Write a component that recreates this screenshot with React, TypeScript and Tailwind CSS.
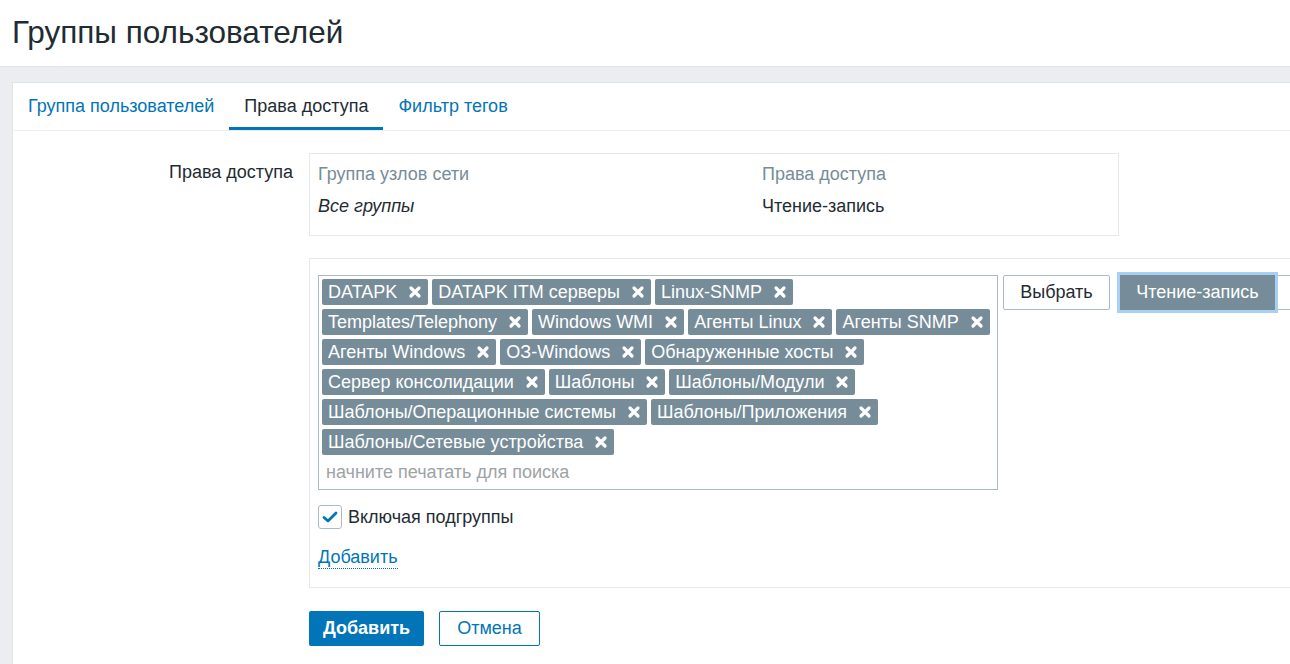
import React from 'react';

const rows: string[][] = [
  ['DATAPK', 'DATAPK ITM серверы', 'Linux-SNMP'],
  ['Templates/Telephony', 'Windows WMI', 'Агенты Linux', 'Агенты SNMP'],
  ['Агенты Windows', 'ОЗ-Windows', 'Обнаруженные хосты'],
  ['Сервер консолидации', 'Шаблоны', 'Шаблоны/Модули'],
  ['Шаблоны/Операционные системы', 'Шаблоны/Приложения'],
  ['Шаблоны/Сетевые устройства'],
];

function CloseIcon() {
  return (
    <svg width="14" height="14" viewBox="0 0 14 14" className="ml-[11px] shrink-0">
      <path d="M3 3 L11 11 M11 3 L3 11" stroke="#fff" strokeWidth="3.2" strokeLinecap="round" />
    </svg>
  );
}

function Tag({ label }: { label: string }) {
  return (
    <span className="flex h-[26px] items-center rounded-[2px] bg-[#768d99] pl-[6px] pr-[6px] text-white mr-[4px] mb-[4px] whitespace-nowrap">
      {label}
      <CloseIcon />
    </span>
  );
}

export default function App() {
  return (
    <div className="w-[1290px] h-[664px] overflow-hidden bg-[#ebeef0] font-['Liberation_Sans',Arial,sans-serif] text-[18px] text-[#1f2c33]">
      <header className="h-[67px] bg-white border-b border-[#dfe4e7] flex items-center px-[12px]">
        <h1 className="text-[31.5px] leading-none text-[#1f2c33] -mt-[1px]">Группы пользователей</h1>
      </header>

      <div className="pt-[15px] pl-[12px]">
        <div className="w-[1400px] h-[600px] bg-white border border-[#dfe4e7]">
          <nav className="flex h-[48px] border-b border-[#ebeef0]">
            <a className="flex items-center px-[15px] text-[#0275b8]">Группа пользователей</a>
            <a className="flex items-center px-[15px] border-b-[3px] border-[#0275b8] pt-[3px]">Права доступа</a>
            <a className="flex items-center px-[15px] text-[#0275b8]">Фильтр тегов</a>
          </nav>

          <div className="flex pt-[22px]">
            <div className="w-[280px] text-right pt-[7px] leading-6 shrink-0">Права доступа</div>
            <div className="ml-[16px] flex flex-col">
              <div className="w-[810px] border border-[#e6e9eb] pt-[7px] pb-[16px] px-[8px]">
                <div className="flex h-[26px] items-center text-[#768d99]">
                  <span className="w-[444px]">Группа узлов сети</span>
                  <span>Права доступа</span>
                </div>
                <div className="flex h-[26px] items-center mt-[6px]">
                  <span className="w-[444px] italic">Все группы</span>
                  <span>Чтение-запись</span>
                </div>
              </div>

              <div className="mt-[22px] w-[1200px] border-t border-l border-b border-[#e6e9eb] pl-[8px] pt-[16px] pb-[18px]">
                <div className="flex items-start">
                  <div className="w-[680px] border border-[#acbbc2] pt-[3px] pl-[3px] pb-[3px] shrink-0">
                    {rows.map((row, i) => (
                      <div key={i} className="flex">
                        {row.map((t) => (
                          <Tag key={t} label={t} />
                        ))}
                      </div>
                    ))}
                    <div className="h-[27px] flex items-center pl-[4px] text-[#9ea3a6]">
                      начните печатать для поиска
                    </div>
                  </div>

                  <button className="ml-[5px] h-[35px] w-[107px] shrink-0 rounded-[2px] border border-[#acbbc2] bg-white text-[#1f2c33]">
                    Выбрать
                  </button>
                  <div className="ml-[10px] flex shrink-0">
                    <button className="relative z-10 h-[35px] w-[155px] bg-[#768d99] text-white shadow-[0_0_0_3px_#a8d0f2]">
                      Чтение-запись
                    </button>
                    <button
                      aria-label="Только чтение"
                      className="h-[35px] w-[150px] border border-[#acbbc2] bg-white"
                    />
                  </div>
                </div>

                <label className="mt-[15px] flex items-center leading-6">
                  <span className="flex h-[24px] w-[24px] items-center justify-center rounded-[3px] border border-[#acbbc2] bg-white">
                    <svg width="16" height="14" viewBox="0 0 16 14">
                      <path d="M2 7.5 L6 11 L14 3" stroke="#0275b8" strokeWidth="2.8" fill="none" strokeLinecap="round" strokeLinejoin="round" />
                    </svg>
                  </span>
                  <span className="ml-[6px]">Включая подгруппы</span>
                </label>

                <div className="mt-[18px] flex leading-[21px]">
                  <a className="block text-[#0275b8] border-b border-dotted border-[#0275b8]">Добавить</a>
                </div>
              </div>

              <div className="mt-[23px] flex">
                <button className="h-[35px] w-[115px] rounded-[2px] bg-[#0275b8] font-bold text-white">
                  Добавить
                </button>
                <button className="ml-[15px] h-[35px] w-[101px] rounded-[2px] border border-[#0275b8] bg-white text-[#0275b8]">
                  Отмена
                </button>
              </div>
            </div>
          </div>
        </div>
      </div>
    </div>
  );
}
